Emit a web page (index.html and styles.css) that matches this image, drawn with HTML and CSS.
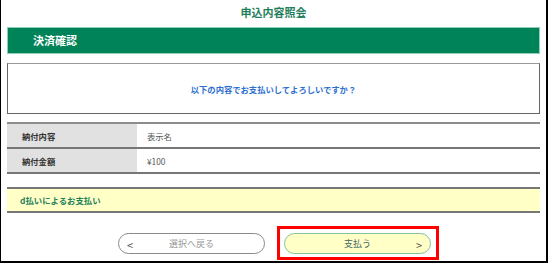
FILE: index.html
```html
<!DOCTYPE html>
<html lang="ja">
<head>
    <meta charset="UTF-8">
    <title>申込内容照会</title>
    <link rel="stylesheet" href="styles.css">
</head>
<body>
    <div class="frame">
        <h1 class="page-title">申込内容照会</h1>
        <div class="section-bar"><span class="section-label">決済確認</span></div>
        <div class="message-box">以下の内容でお支払いしてよろしいですか？</div>
        <table class="detail-table">
            <tr>
                <th>納付内容</th>
                <td>表示名</td>
            </tr>
            <tr>
                <th>納付金額</th>
                <td>¥100</td>
            </tr>
        </table>
        <div class="method-box">d払いによるお支払い</div>
        <div class="button-row">
            <button class="btn btn-back"><span class="arrow arrow-left">&lt;</span>選択へ戻る</button>
            <div class="highlight">
                <button class="btn btn-pay">支払う<span class="arrow arrow-right">&gt;</span></button>
            </div>
        </div>
    </div>
</body>
</html>
```

FILE: styles.css
```css
* {
    box-sizing: border-box;
}
body {
    margin: 0;
    font-family: "Noto Sans CJK JP", "Noto Sans", sans-serif;
    background: #fff;
}
.frame {
    width: 548px;
    height: 263px;
    border-left: 1px solid #000;
    border-right: 2px solid #000;
    border-bottom: 2px solid #000;
    padding: 0 6px 0 6px;
    display: flex;
    flex-direction: column;
}
.frame > * {
    flex-shrink: 0;
}
.page-title {
    margin: 0;
    height: 27px;
    line-height: 25px;
    font-size: 11px;
    font-weight: bold;
    color: #1f7f5c;
    text-align: center;
}
.section-bar {
    display: flex;
    align-items: center;
    height: 27px;
    background-color: #008358;
    border: 1px solid #8fcfb4;
    padding-left: 25px;
}
.section-label {
    color: #fff;
    font-size: 11px;
    font-weight: bold;
    line-height: 1;
}
.message-box {
    margin-top: 9px;
    height: 51px;
    border: 1px solid #666;
    border-top-color: #999;
    color: #2d6fcf;
    font-size: 8.3px;
    font-weight: bold;
    display: flex;
    align-items: center;
    justify-content: center;
}
.detail-table {
    margin-top: 8px;
    width: 100%;
    border-collapse: collapse;
    border-top: 2px solid #8c8c8c;
    font-size: 8.3px;
}
.detail-table tr {
    border-bottom: 2px solid #777;
}
.detail-table th,
.detail-table td {
    height: 25px;
    padding: 0;
    text-align: left;
}
.detail-table th {
    width: 130px;
    background-color: #e1e1e1;
    font-weight: bold;
    color: #333;
    padding-left: 15px;
}
.detail-table td {
    color: #555;
    padding-left: 10px;
}
.method-box {
    margin-top: 13px;
    height: 26px;
    background-color: #ffffc6;
    border-top: 2px solid #777;
    border-bottom: 2px solid #777;
    color: #1f7f5c;
    font-size: 8.4px;
    font-weight: bold;
    line-height: 22px;
    padding-left: 13px;
}
.button-row {
    display: flex;
    justify-content: center;
    align-items: center;
    gap: 12px;
    margin-top: 13px;
    padding-left: 10px;
}
.btn {
    position: relative;
    width: 147px;
    height: 21px;
    border-radius: 11px;
    font-family: inherit;
    font-size: 9px;
    padding: 0;
}
.btn-back {
    background: #fff;
    border: 1px solid #8a8a8a;
    color: #999;
}
.btn-pay {
    background: #ffffc6;
    border: 1px solid #82c29c;
    color: #466;
}
.arrow {
    position: absolute;
    top: 3px;
    font-size: 11px;
    color: #555;
}
.arrow-left {
    left: 8px;
}
.arrow-right {
    right: 8px;
}
.highlight {
    display: flex;
    border: 3px solid #f00;
    padding: 4px 5px 3px 4px;
}
```
